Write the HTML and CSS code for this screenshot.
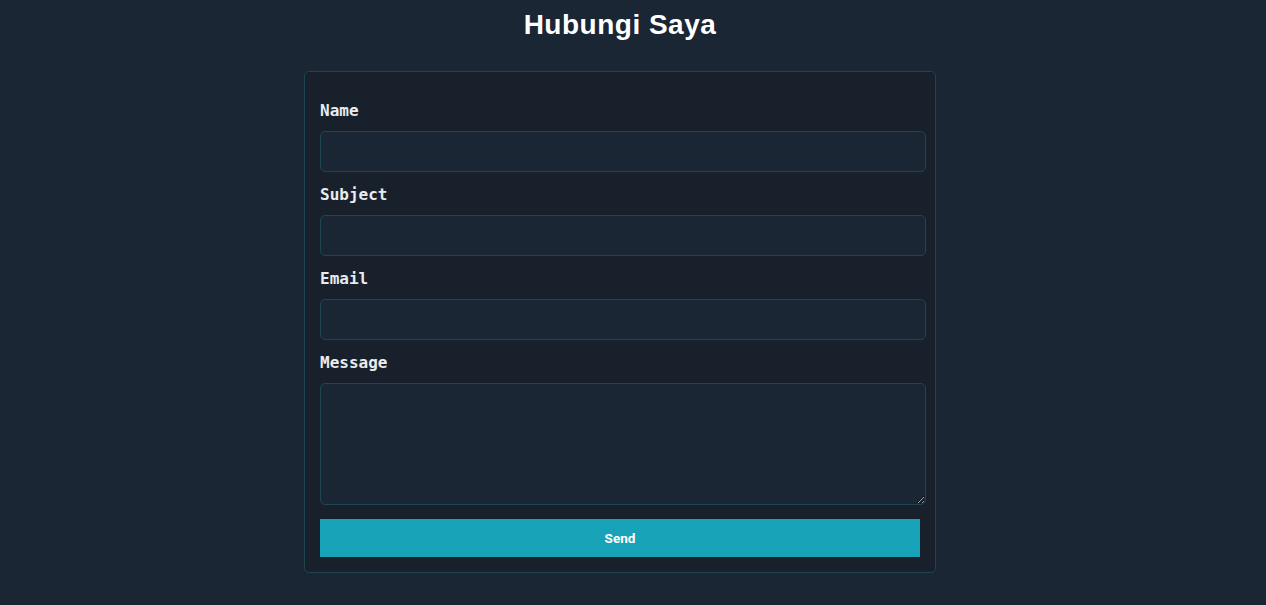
FILE: index.html
```html
<!DOCTYPE html>
<html>
<head>
<meta charset="utf-8">
<link rel="stylesheet" href="styles.css">
</head>
<body>
<main class="page">
  <h1 class="title">Hubungi Saya</h1>
  <form class="card">
    <label class="label">Name</label>
    <input class="field" type="text">
    <label class="label">Subject</label>
    <input class="field" type="text">
    <label class="label">Email</label>
    <input class="field" type="email">
    <label class="label">Message</label>
    <textarea class="field area"></textarea>
    <button class="send" type="button">Send</button>
  </form>
</main>
</body>
</html>
```
FILE: styles.css
```css
html, body {
  margin: 0;
  padding: 0;
  background: #1a2634;
}
.page {
  display: flex;
  flex-direction: column;
  align-items: center;
  padding: 7px 26px 0 0;
}
.title {
  margin: 0 0 28px;
  font-family: "Liberation Sans", Arial, sans-serif;
  font-weight: bold;
  font-size: 28px;
  line-height: 36px;
  color: #ffffff;
  letter-spacing: 0.5px;
}
.card {
  box-sizing: border-box;
  width: 632px;
  background: #18202b;
  border: 1px solid #1d4652;
  border-radius: 5px;
  padding: 29px 15px 15px;
  display: flex;
  flex-direction: column;
  align-items: flex-start;
}
.label {
  font-family: "DejaVu Sans Mono", monospace;
  font-weight: bold;
  font-size: 16px;
  line-height: 19px;
  color: #e8ecef;
  margin-bottom: 11px;
}
.field {
  box-sizing: border-box;
  width: 606px;
  height: 41px;
  background: #1a2634;
  border: 1px solid #1d4652;
  border-radius: 5px;
  margin: 0 0 13px;
  padding: 6px 10px;
  color: #fff;
  outline: none;
  display: block;
}
.area {
  height: 122px;
  margin-bottom: 14px;
  resize: vertical;
}
.send {
  width: 600px;
  height: 38px;
  border: none;
  border-radius: 0;
  background: #17a2b8;
  color: #ffffff;
  font-family: Roboto, sans-serif;
  font-weight: bold;
  font-size: 13.5px;
  padding: 0;
}
```
